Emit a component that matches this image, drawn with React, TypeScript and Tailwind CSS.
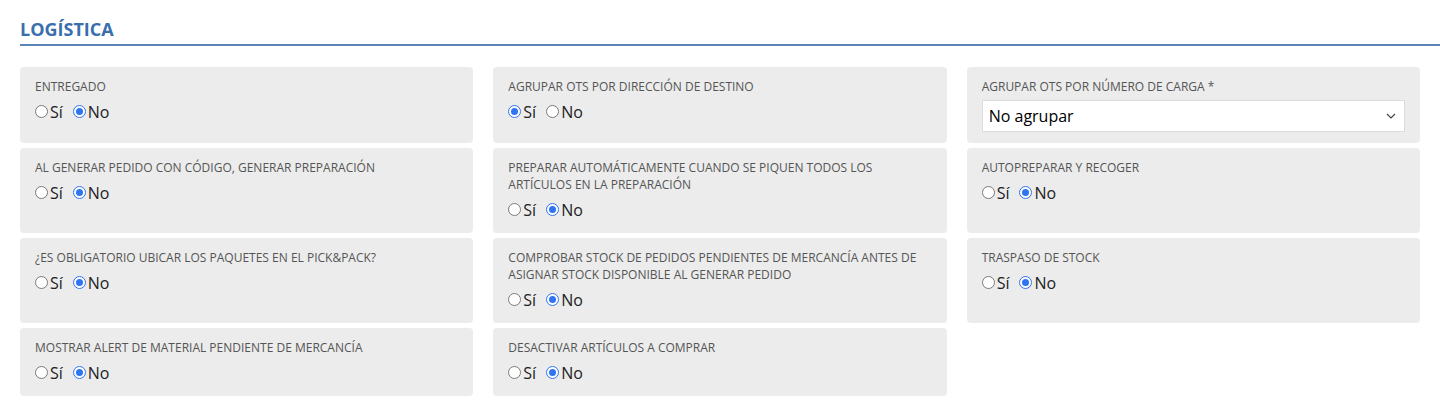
import React from "react";

type Field =
  | { kind: "radio"; label: string; value: boolean }
  | { kind: "select"; label: string; value: string };

const columns: Field[][] = [
  [
    { kind: "radio", label: "Entregado", value: false },
    { kind: "radio", label: "Al generar pedido con código, generar preparación", value: false },
    { kind: "radio", label: "¿Es obligatorio ubicar los paquetes en el Pick&Pack?", value: false },
    { kind: "radio", label: "Mostrar alert de material pendiente de mercancía", value: false },
  ],
  [
    { kind: "radio", label: "Agrupar OTs por dirección de destino", value: true },
    {
      kind: "radio",
      label: "Preparar automáticamente cuando se piquen todos los artículos en la preparación",
      value: false,
    },
    {
      kind: "radio",
      label: "Comprobar stock de pedidos pendientes de mercancía antes de asignar stock disponible al generar pedido",
      value: false,
    },
    { kind: "radio", label: "Desactivar artículos a comprar", value: false },
  ],
  [
    { kind: "select", label: "Agrupar OTs por número de carga *", value: "No agrupar" },
    { kind: "radio", label: "Autopreparar y recoger", value: false },
    { kind: "radio", label: "Traspaso de stock", value: false },
  ],
];

const Radio = ({ checked, text }: { checked: boolean; text: string }) => (
  <span className="flex items-center">
    {checked ? (
      <span className="flex h-[13px] w-[13px] items-center justify-center rounded-full border-[1.5px] border-[#2f74f0] bg-white">
        <span className="h-[7px] w-[7px] rounded-full bg-[#2f74f0]" />
      </span>
    ) : (
      <span className="h-[13px] w-[13px] rounded-full border border-[#7a7a7a] bg-white" />
    )}
    <span className="ml-[2px]">{text}</span>
  </span>
);

const Card = ({ field }: { field: Field }) => (
  <div className="rounded-[4px] bg-[#ececec] px-[15px] pt-[11px] pb-[11px]">
    <div className="pr-[8px] text-[12px] leading-[17px] uppercase text-[#555]">{field.label}</div>
    {field.kind === "radio" ? (
      <div className="mt-[5px] flex h-[24px] items-center gap-[10px] text-[16px] text-[#222]">
        <Radio checked={field.value} text="Sí" />
        <Radio checked={!field.value} text="No" />
      </div>
    ) : (
      <div className="mt-[5px] flex h-[32px] items-center justify-between border border-[#dcdcdc] bg-white pl-[6px] pr-[8px] text-[16px] text-black">
        <span>{field.value}</span>
        <svg width="10" height="6" viewBox="0 0 10 6" fill="none">
          <path d="M1 1l4 4 4-4" stroke="#444" strokeWidth="1.2" />
        </svg>
      </div>
    )}
  </div>
);

export default function App() {
  const rows = [0, 1, 2, 3];
  return (
    <div className="min-h-[415px] bg-white pl-[20px] pt-[16px] font-['Open_Sans',sans-serif]">
      <h2 className="text-[18px] leading-[26px] font-bold text-[#3a6fae]">LOGÍSTICA</h2>
      <div className="mt-[2px] h-[1.5px] bg-[#5a83b8]" />
      <div className="mt-[21px] mr-[20px] grid grid-cols-3 gap-x-[20px] gap-y-[5px]">
        {rows.map((r) =>
          columns.map((col, c) =>
            col[r] ? <Card key={`${r}-${c}`} field={col[r]} /> : <div key={`${r}-${c}`} />
          )
        )}
      </div>
    </div>
  );
}
